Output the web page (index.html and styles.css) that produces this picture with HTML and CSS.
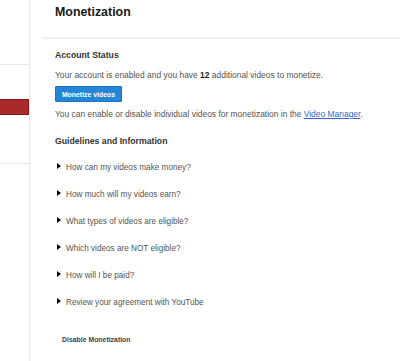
FILE: index.html
```html
<!DOCTYPE html>
<html>
<head>
<meta charset="utf-8">
<link rel="stylesheet" href="styles.css">
</head>
<body>
<div class="page">
  <aside class="sidebar">
    <div class="nav-top"></div>
    <div class="nav-gap"></div>
    <div class="nav-active"></div>
    <div class="nav-item"></div>
  </aside>
  <main class="main">
    <header class="header">
      <h1 class="title">Monetization</h1>
    </header>
    <section class="section">
      <h2 class="heading">Account Status</h2>
      <p class="text status">Your account is enabled and you have <b>12</b> additional videos to monetize.</p>
      <button class="btn">Monetize videos</button>
      <p class="text note">You can enable or disable individual videos for monetization in the <a class="link" href="#">Video Manager</a>.</p>
      <h2 class="heading guide">Guidelines and Information</h2>
      <ul class="faq">
        <li class="faq-item"><span class="arrow"></span>How can my videos make money?</li>
        <li class="faq-item"><span class="arrow"></span>How much will my videos earn?</li>
        <li class="faq-item"><span class="arrow"></span>What types of videos are eligible?</li>
        <li class="faq-item"><span class="arrow"></span>Which videos are NOT eligible?</li>
        <li class="faq-item"><span class="arrow"></span>How will I be paid?</li>
        <li class="faq-item"><span class="arrow"></span>Review your agreement with YouTube</li>
      </ul>
      <div class="disable">Disable Monetization</div>
    </section>
  </main>
</div>
</body>
</html>
```
FILE: styles.css
```css
html, body {
  margin: 0;
  padding: 0;
  background: #fff;
}
body {
  font-family: "Liberation Sans", Arial, sans-serif;
  width: 400px;
  height: 361px;
  overflow: hidden;
}
.page {
  display: flex;
  height: 361px;
}
.sidebar {
  width: 29px;
  flex: none;
  border-right: 1px solid #e6e6e6;
  display: flex;
  flex-direction: column;
}
.nav-top {
  height: 64px;
  border-bottom: 1px solid #e6e6e6;
}
.nav-gap {
  height: 34px;
}
.nav-active {
  height: 14px;
  background: #a92a2a;
  border: 1px solid #8e1717;
  border-left: none;
}
.nav-item {
  height: 48px;
  border-bottom: 1px solid #e6e6e6;
}
.main {
  flex: 1;
  min-width: 0;
}
.header {
  margin-left: 12px;
  padding: 0 0 13px 13px;
  border-bottom: 2px solid #f1f1f1;
}
.title {
  margin: 0;
  font-size: 12.4px;
  line-height: 24px;
  font-weight: bold;
  color: #1a1a1a;
}
.section {
  padding-left: 25px;
}
.heading {
  margin: 10px 0 0;
  font-size: 8.7px;
  line-height: 12px;
  font-weight: bold;
  color: #333;
}
.text {
  margin: 0;
  font-size: 8.45px;
  line-height: 12px;
  color: #555;
  white-space: nowrap;
}
.text b {
  color: #222;
}
.status {
  margin-top: 8px;
}
.btn {
  display: block;
  margin: 5px 0 0;
  width: 67px;
  height: 16px;
  padding: 0;
  background: #2585d6;
  border: 1px solid #1d74c2;
  border-radius: 1px;
  color: #fff;
  font-family: "Liberation Sans", Arial, sans-serif;
  font-size: 6.9px;
  font-weight: bold;
}
.note {
  margin-top: 6px;
}
.link {
  color: #3a66c4;
  text-decoration: underline;
}
.guide {
  margin-top: 15px;
}
.faq {
  list-style: none;
  margin: 15px 0 0;
  padding: 0;
  display: flex;
  flex-direction: column;
  gap: 15px;
}
.faq-item {
  font-size: 8.2px;
  line-height: 12px;
  color: #555;
  white-space: nowrap;
  display: flex;
  align-items: flex-start;
}
.arrow {
  width: 0;
  height: 0;
  margin: 0.5px 5px 0 2px;
  border-left: 4px solid #000;
  border-top: 3px solid transparent;
  border-bottom: 3px solid transparent;
}
.disable {
  margin: 25px 0 0 7px;
  font-size: 6.9px;
  line-height: 12px;
  font-weight: bold;
  color: #444;
}
```
